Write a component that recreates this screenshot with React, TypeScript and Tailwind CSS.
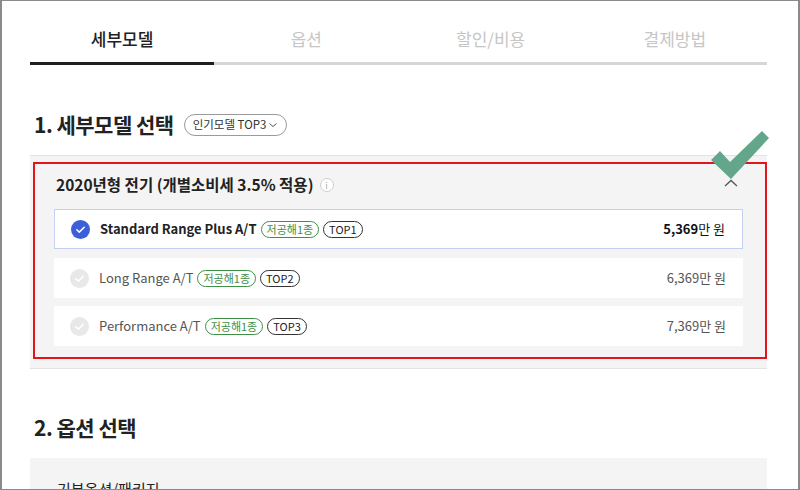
import React from "react";

const F = "font-['Noto_Sans_CJK_KR','Noto_Sans',sans-serif]";

function CheckCircle({ active }: { active: boolean }) {
  return (
    <svg width="19" height="19" viewBox="0 0 19 19">
      <circle cx="9.5" cy="9.5" r="9.5" fill={active ? "#3b5ed9" : "#e8e8e8"} />
      <path d="M5.8 9.8 L8.3 12.1 L13.2 7.2" fill="none" stroke="#fff" strokeWidth="1.5" strokeLinecap="round" strokeLinejoin="round" />
    </svg>
  );
}

function Row({ name, top, price, active }: { name: string; top: string; price: string; active: boolean }) {
  return (
    <div
      className={`h-[40px] flex items-center pl-[16px] pr-[17px] bg-white ${
        active ? "border border-[#c3d0f2]" : ""
      }`}
    >
      <CheckCircle active={active} />
      <span className={`ml-[10px] text-[13px] ${active ? "font-bold text-[#222]" : "text-[#555]"}`}>{name}</span>
      <span className="ml-[4px] h-[17px] px-[5px] rounded-full border border-[#3f8f47] text-[#3f8f47] text-[11px] leading-[14px] flex items-center">
        저공해1종
      </span>
      <span className="ml-[4px] h-[17px] px-[5px] rounded-full border border-[#333] text-[#222] text-[11px] leading-[14px] flex items-center">
        {top}
      </span>
      <span className="ml-auto text-[13px] text-[#555]">
        <span className={active ? "font-bold text-[#111]" : ""}>{price}</span>
        <span className={active ? "text-[#111]" : ""}>만 원</span>
      </span>
    </div>
  );
}

export default function App() {
  const tabs = ["세부모델", "옵션", "할인/비용", "결제방법"];
  return (
    <div className={`w-[800px] h-[490px] overflow-hidden bg-white border-t border-b border-l-2 border-r-2 border-[#8a8a8a] relative ${F}`}>
      <div className="ml-[28px] w-[737px]">
        {/* tabs */}
        <div className="flex h-[61px] pt-[26px]">
          {tabs.map((t, i) => (
            <div
              key={t}
              className={`flex-1 text-center text-[17px] leading-[24px] ${i === 0 ? "text-[#222] font-medium" : "text-[#c6c6c6]"}`}
            >
              {t}
            </div>
          ))}
        </div>
        <div className="flex h-[3px] bg-[#d6d6d6]">
          <div className="w-[184px] bg-[#1e1e1e]" />
        </div>

        {/* section 1 */}
        <div className="mt-[46px] flex items-center h-[28px] pl-[4px]">
          <span className="text-[21px] font-bold text-[#222] tracking-[-0.5px]">1. 세부모델 선택</span>
          <span className="ml-[10px] h-[22px] px-[8px] rounded-full border border-[#9a9a9a] text-[11.5px] text-[#333] flex items-center">
            인기모델 TOP3
            <svg width="10" height="8" viewBox="0 0 10 8" className="ml-[2px]">
              <path d="M1.5 2.5 L5 5.5 L8.5 2.5" fill="none" stroke="#555" strokeWidth="1" />
            </svg>
          </span>
        </div>

        <div className="mt-[16px] border-t border-b border-[#e3e3e3] bg-[#f4f4f4] px-[24px] pb-[22px]">
          <div className="h-[53px] flex items-center pt-[5px] pl-[2px]">
            <span className="text-[15.5px] font-bold text-[#222]">2020년형 전기 (개별소비세 3.5% 적용)</span>
            <span className="ml-[6px] w-[14px] h-[14px] rounded-full border border-[#cfcfcf] bg-white text-[#aaa] text-[9px] leading-none flex items-center justify-center">
              i
            </span>
            <svg width="14" height="8" viewBox="0 0 14 8" className="ml-auto mr-[5px] mt-[-4px]">
              <path d="M1 7 L7 1.5 L13 7" fill="none" stroke="#555" strokeWidth="1.3" />
            </svg>
          </div>
          <Row name="Standard Range Plus A/T" top="TOP1" price="5,369" active />
          <div className="h-[9px]" />
          <Row name="Long Range A/T" top="TOP2" price="6,369" active={false} />
          <div className="h-[8px]" />
          <Row name="Performance A/T" top="TOP3" price="7,369" active={false} />
        </div>

        {/* section 2 */}
        <div className="mt-[45px] flex items-center h-[28px] pl-[4px]">
          <span className="text-[21px] font-bold text-[#222] tracking-[-0.5px]">2. 옵션 선택</span>
        </div>
        <div className="mt-[16px] bg-[#f4f4f4] h-[60px] pt-[18px] pl-[27px]">
          <span className="text-[15px] text-[#222]">기본옵션/패키지</span>
        </div>
      </div>

      {/* annotation: red box */}
      <div className="absolute left-[31px] top-[161px] w-[734px] h-[197px] border-2 border-[#e5141c] pointer-events-none" />
      {/* annotation: green check */}
      <svg className="absolute left-0 top-0 pointer-events-none" width="800" height="490">
        <polygon points="709,160 718,151 728,162 760,131 767,138 729,179" fill="#63a68b" transform="translate(0,-1)" />
      </svg>
    </div>
  );
}
